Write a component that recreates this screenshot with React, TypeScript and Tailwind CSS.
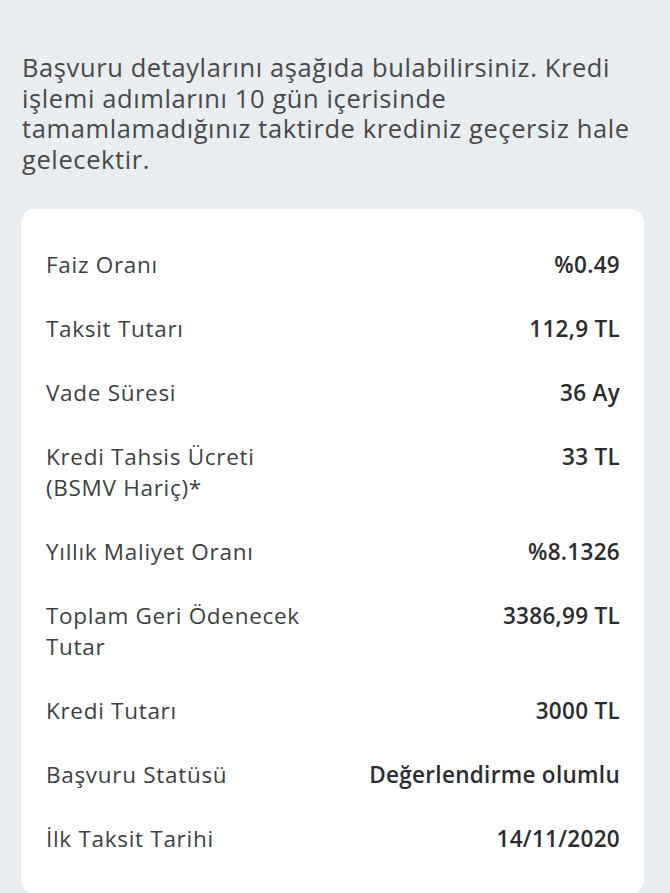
import React from "react";

const rows: { label: string[]; value: string }[] = [
  { label: ["Faiz Oranı"], value: "%0.49" },
  { label: ["Taksit Tutarı"], value: "112,9 TL" },
  { label: ["Vade Süresi"], value: "36 Ay" },
  { label: ["Kredi Tahsis Ücreti", "(BSMV Hariç)*"], value: "33 TL" },
  { label: ["Yıllık Maliyet Oranı"], value: "%8.1326" },
  { label: ["Toplam Geri Ödenecek", "Tutar"], value: "3386,99 TL" },
  { label: ["Kredi Tutarı"], value: "3000 TL" },
  { label: ["Başvuru Statüsü"], value: "Değerlendirme olumlu" },
  { label: ["İlk Taksit Tarihi"], value: "14/11/2020" },
];

export default function App() {
  return (
    <div
      className="w-[670px] h-[893px] overflow-hidden bg-[#e9edf0] flex flex-col"
      style={{ fontFamily: "'Open Sans', 'Noto Sans', sans-serif" }}
    >
      <div className="h-[3px] bg-[#d8001d] shadow-[0_2px_4px_rgba(216,0,29,0.35)]" />
      <div className="pl-[22px] pr-[20px] pt-[52px] text-[25.5px] leading-[30.5px] tracking-[0.6px] text-[#47494b] whitespace-nowrap">
        Başvuru detaylarını aşağıda bulabilirsiniz. Kredi
        <br />
        işlemi adımlarını 10 gün içerisinde
        <br />
        tamamlamadığınız taktirde krediniz geçersiz hale
        <br />
        gelecektir.
      </div>
      <div className="mt-[35px] ml-[21px] mr-[26px] bg-white rounded-[14px] pt-[40px] pb-[40px] pl-[25px] pr-[24px] flex flex-col gap-[33px]">
        {rows.map((r, i) => (
          <div key={i} className="flex justify-between items-start text-[22.5px] leading-[31px]">
            <div className="text-[#3d3f41] tracking-[0.7px]">
              {r.label.map((l, j) => (
                <div key={j}>{l}</div>
              ))}
            </div>
            <div className="text-[#2b2c2e] font-semibold text-right tracking-[0.3px]">{r.value}</div>
          </div>
        ))}
      </div>
    </div>
  );
}
